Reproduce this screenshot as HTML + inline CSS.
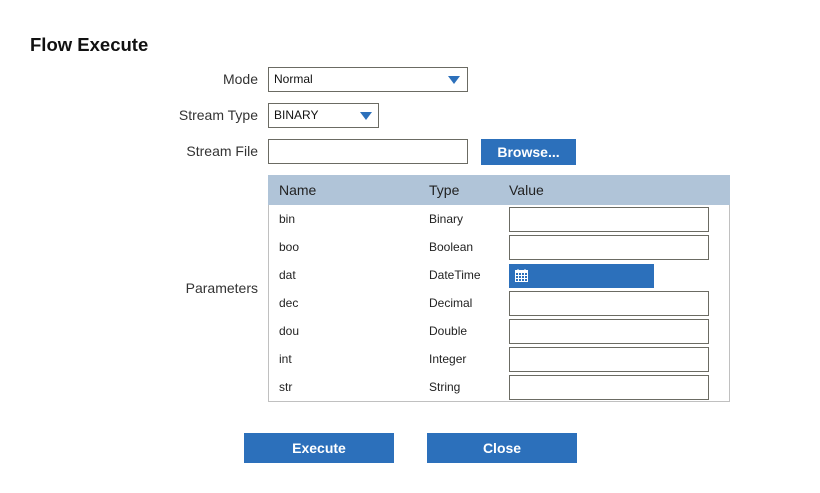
<!DOCTYPE html><html><head><style>
body{margin:0;width:820px;height:493px;background:#fff;font-family:"Liberation Sans",Arial,sans-serif;color:#222;position:relative;overflow:hidden}
.a{position:absolute}
.lbl{position:absolute;right:562px;font-size:14px;color:#333;line-height:16px}
.box{position:absolute;border:1px solid #6b6b63;background:#fff;box-sizing:border-box;font-size:12px;line-height:23px;padding-left:5px;color:#111}
.tri{position:absolute;width:0;height:0;border-left:6px solid transparent;border-right:6px solid transparent;border-top:8px solid #2c70bb}
.btn{position:absolute;background:#2c70bb;color:#fff;font-weight:bold;font-size:14px;text-align:center}
.t{position:absolute;font-size:12px;color:#222;line-height:14px}
</style></head><body>
<div class="a" style="left:30px;top:34px;font-size:18.5px;font-weight:bold;color:#111">Flow Execute</div>
<div class="lbl" style="top:71px">Mode</div>
<div class="box" style="left:268px;top:67px;width:200px;height:25px">Normal</div>
<div class="tri" style="left:448px;top:76px"></div>
<div class="lbl" style="top:107px">Stream Type</div>
<div class="box" style="left:268px;top:103px;width:111px;height:25px">BINARY</div>
<div class="tri" style="left:360px;top:112px"></div>
<div class="lbl" style="top:143px">Stream File</div>
<div class="box" style="left:268px;top:139px;width:200px;height:25px"></div>
<div class="btn" style="left:481px;top:139px;width:95px;height:26px;line-height:26px">Browse...</div>
<div class="lbl" style="top:280px">Parameters</div>
<div class="a" style="left:268px;top:175px;width:460px;height:226px;border:1px solid #c0c0c0;border-top:none"></div>
<div class="a" style="left:268px;top:175px;width:462px;height:30px;background:#b0c4d8"></div>
<div class="a" style="left:279px;top:182px;font-size:14px;color:#222">Name</div>
<div class="a" style="left:429px;top:182px;font-size:14px;color:#222">Type</div>
<div class="a" style="left:509px;top:182px;font-size:14px;color:#222">Value</div>
<div class="t" style="left:279px;top:212px">bin</div><div class="t" style="left:429px;top:212px">Binary</div>
<div class="box" style="left:509px;top:207px;width:200px;height:25px"></div>
<div class="t" style="left:279px;top:240px">boo</div><div class="t" style="left:429px;top:240px">Boolean</div>
<div class="box" style="left:509px;top:235px;width:200px;height:25px"></div>
<div class="t" style="left:279px;top:268px">dat</div><div class="t" style="left:429px;top:268px">DateTime</div>
<div class="a" style="left:509px;top:264px;width:145px;height:24px;background:#2c70bb"></div>
<svg class="a" style="left:515px;top:269px" width="13" height="13" viewBox="0 0 13 13"><rect x="0.5" y="1.5" width="12" height="11" fill="none" stroke="#fff"/><rect x="0" y="1" width="13" height="3" fill="#fff"/><path d="M3.5 4v8M6.5 4v8M9.5 4v8M0 6.5h13M0 9.5h13" stroke="#fff"/><path d="M3 0v2M10 0v2" stroke="#fff"/></svg>
<div class="t" style="left:279px;top:296px">dec</div><div class="t" style="left:429px;top:296px">Decimal</div>
<div class="box" style="left:509px;top:291px;width:200px;height:25px"></div>
<div class="t" style="left:279px;top:324px">dou</div><div class="t" style="left:429px;top:324px">Double</div>
<div class="box" style="left:509px;top:319px;width:200px;height:25px"></div>
<div class="t" style="left:279px;top:352px">int</div><div class="t" style="left:429px;top:352px">Integer</div>
<div class="box" style="left:509px;top:347px;width:200px;height:25px"></div>
<div class="t" style="left:279px;top:380px">str</div><div class="t" style="left:429px;top:380px">String</div>
<div class="box" style="left:509px;top:375px;width:200px;height:25px"></div>
<div class="btn" style="left:244px;top:433px;width:150px;height:30px;line-height:30px">Execute</div>
<div class="btn" style="left:427px;top:433px;width:150px;height:30px;line-height:30px">Close</div>
</body></html>
